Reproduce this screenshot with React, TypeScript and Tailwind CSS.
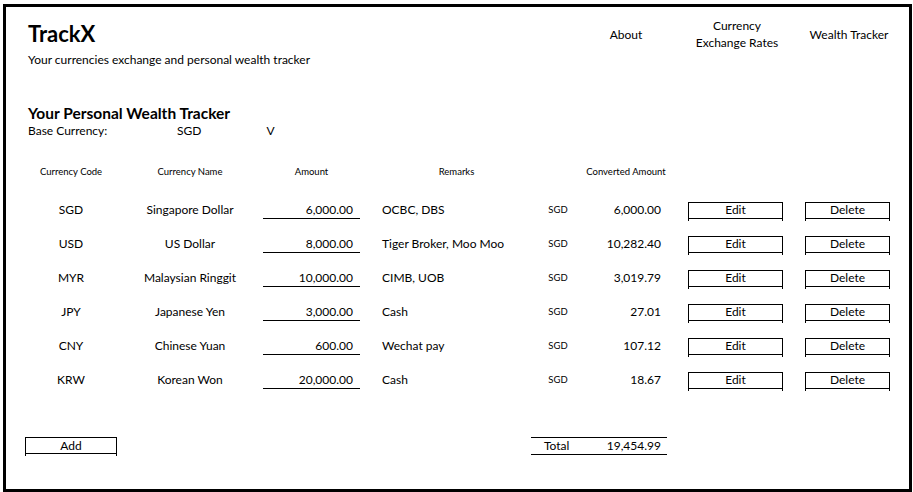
const rows = [
	{ code: "SGD", name: "Singapore Dollar", amount: "6,000.00", remarks: "OCBC, DBS", converted: "6,000.00" },
	{ code: "USD", name: "US Dollar", amount: "8,000.00", remarks: "Tiger Broker, Moo Moo", converted: "10,282.40" },
	{ code: "MYR", name: "Malaysian Ringgit", amount: "10,000.00", remarks: "CIMB, UOB", converted: "3,019.79" },
	{ code: "JPY", name: "Japanese Yen", amount: "3,000.00", remarks: "Cash", converted: "27.01" },
	{ code: "CNY", name: "Chinese Yuan", amount: "600.00", remarks: "Wechat pay", converted: "107.12" },
	{ code: "KRW", name: "Korean Won", amount: "20,000.00", remarks: "Cash", converted: "18.67" },
];

const BoxButton = ({ label, width }: { label: string; width: string }) => (
	<div className={`border-x border-black h-[19px] ${width}`}>
		<div className="border-y border-black h-[17px] flex items-center justify-center text-[12px] leading-none">
			{label}
		</div>
	</div>
);

const App = () => {
	return (
		<div className="w-[913px] h-[492px] bg-white pt-[4px] pl-[3px] text-black font-['Lato','Liberation_Sans',sans-serif]">
			<div className="w-[909px] h-[488px] border-[3px] border-black flex flex-col">
				{/* header */}
				<div className="flex justify-between pr-[12px]">
					<div className="pl-[22px]">
						<div className="mt-[13px] text-[22px] leading-[28px] font-bold">TrackX</div>
						<div className="mt-[4px] text-[12px] leading-[16px]">
							Your currencies exchange and personal wealth tracker
						</div>
					</div>
					<div className="flex items-center mt-[10px] h-[34px] text-[12px] leading-[17px] text-center">
						<div className="w-[60px]">About</div>
						<div className="w-[92px] ml-[35px]">
							Currency
							<br />
							Exchange Rates
						</div>
						<div className="w-[96px] ml-[18px]">Wealth Tracker</div>
					</div>
				</div>

				{/* tracker */}
				<div className="pl-[22px] mt-[35px] text-[15.5px] leading-[20px] font-bold">
					Your Personal Wealth Tracker
				</div>
				<div className="pl-[22px] flex text-[12px] leading-[16px]">
					<div className="w-[149px]">Base Currency:</div>
					<div>SGD</div>
					<div className="ml-[65px]">V</div>
				</div>

				<div className="mt-[26px] flex items-center h-[14px] text-[9.5px] leading-[14px]">
					<div className="ml-[19px] w-[92px] text-center">Currency Code</div>
					<div className="ml-[13px] w-[120px] text-center">Currency Name</div>
					<div className="ml-[13px] w-[97px] text-center">Amount</div>
					<div className="ml-[22px] w-[149px] text-center">Remarks</div>
					<div className="w-[54px]" />
					<div className="w-[82px] text-center">Converted Amount</div>
				</div>

				<div className="mt-[14px] flex flex-col">
					{rows.map((r) => (
						<div key={r.code} className="flex items-center h-[34px] text-[12px]">
							<div className="ml-[19px] w-[92px] text-center">{r.code}</div>
							<div className="ml-[13px] w-[120px] text-center">{r.name}</div>
							<div className="ml-[13px] w-[97px] h-[17px] border-b border-black flex items-center justify-end pr-[7px]">
								{r.amount}
							</div>
							<div className="ml-[22px] w-[149px]">{r.remarks}</div>
							<div className="w-[54px] text-center text-[9.5px]">SGD</div>
							<div className="w-[82px] text-right pr-[6px]">{r.converted}</div>
							<div className="ml-[21px] mt-[2px]">
								<BoxButton label="Edit" width="w-[95px]" />
							</div>
							<div className="ml-[22px] mt-[2px]">
								<BoxButton label="Delete" width="w-[85px]" />
							</div>
						</div>
					))}
				</div>

				<div className="mt-[40px] flex items-start text-[12px]">
					<div className="ml-[19px]">
						<BoxButton label="Add" width="w-[92px]" />
					</div>
					<div className="ml-[414px] w-[136px] h-[18px] border-y border-black flex items-center justify-between pl-[13px] pr-[6px]">
						<span>Total</span>
						<span>19,454.99</span>
					</div>
				</div>
			</div>
		</div>
	);
};

export default App;
